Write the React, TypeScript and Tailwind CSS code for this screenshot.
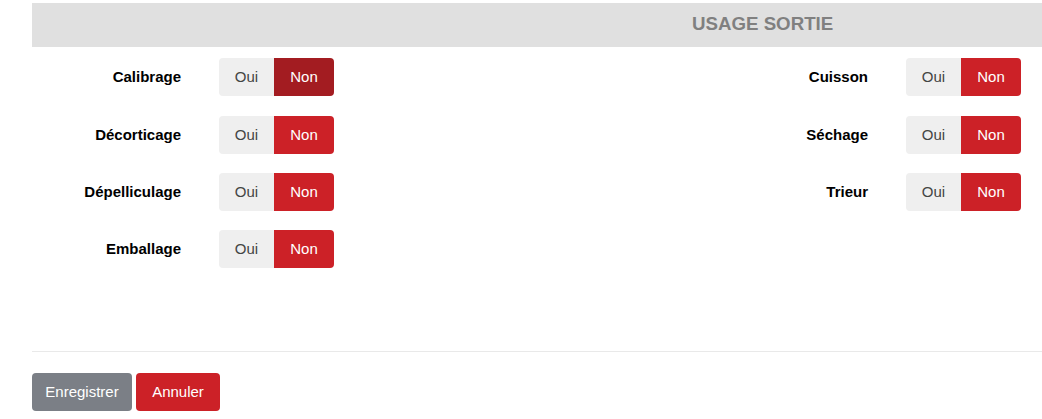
import { useState } from "react";

const leftItems = ["Calibrage", "Décorticage", "Dépelliculage", "Emballage"];
const rightItems = ["Cuisson", "Séchage", "Trieur"];

const Toggle = ({ active }: { active?: boolean }) => {
  const [value, setValue] = useState(false);
  return (
    <div className="flex h-[38px] rounded-[4px] overflow-hidden text-[15px]">
      <button
        onClick={() => setValue(true)}
        className={`w-[55px] ${value ? "bg-[#cc2127] text-white" : "bg-[#efefef] text-[#444]"}`}
      >
        Oui
      </button>
      <button
        onClick={() => setValue(false)}
        className={`w-[60px] ${
          !value ? (active ? "bg-[#a31c21] text-white" : "bg-[#cc2127] text-white") : "bg-[#efefef] text-[#444]"
        }`}
      >
        Non
      </button>
    </div>
  );
};

const Row = ({ label, active, first }: { label: string; active?: boolean; first?: boolean }) => (
  <div className={`flex items-center ${first ? "mb-[1px]" : ""}`}>
    <div className="w-[149px] text-right font-bold text-[15px] text-black">{label}</div>
    <div className="ml-[38px]">
      <Toggle active={active} />
    </div>
  </div>
);

export default function App() {
  return (
    <div
      className="w-[1042px] h-[419px] overflow-hidden bg-white pl-[32px] pt-[3px]"
      style={{ fontFamily: '"Liberation Sans", Arial, sans-serif' }}
    >
      <div className="h-[44px] bg-[#e0e0e0] flex items-center pl-[660px] pb-[1px]">
        <span className="font-bold text-[18.7px] text-[#808080]">USAGE SORTIE</span>
      </div>

      <div className="grid grid-cols-[687px_1fr] mt-[11px]">
        <div className="flex flex-col gap-[19px]">
          {leftItems.map((l, i) => (
            <Row key={l} label={l} active={i === 0} first={i === 0} />
          ))}
        </div>
        <div className="flex flex-col gap-[19px]">
          {rightItems.map((l, i) => (
            <Row key={l} label={l} first={i === 0} />
          ))}
        </div>
      </div>

      <div className="mt-[83px] border-t border-[#e9e9e9]" />

      <div className="flex gap-[4px] mt-[21px]">
        <button className="h-[38px] w-[100px] rounded-[4px] bg-[#7b7f86] text-white text-[15px]">
          Enregistrer
        </button>
        <button className="h-[38px] w-[84px] rounded-[4px] bg-[#cc2127] text-white text-[15px]">
          Annuler
        </button>
      </div>
    </div>
  );
}
